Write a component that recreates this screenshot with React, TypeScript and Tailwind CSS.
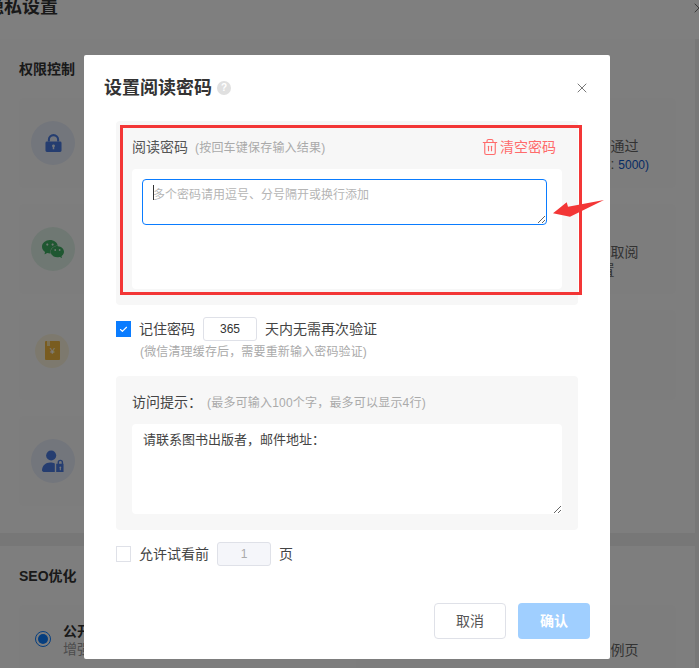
import { Trash2, X, Check } from 'lucide-react';
import { SiWechat } from 'react-icons/si';

function IconCircle({ tone, children }: { tone: string; children: React.ReactNode }) {
  return (
    <div className={`rounded-full flex items-center justify-center shrink-0 ${tone}`}>
      {children}
    </div>
  );
}

function SettingCard({ icon, lines }: { icon: React.ReactNode; lines: React.ReactNode[] }) {
  return (
    <div className="h-[90px] rounded-[4px] bg-[#fbfbfb] pl-[12px] flex items-center gap-[17px]">
      {icon}
      <div className="mt-[6px] text-[14px] leading-[18px] whitespace-nowrap text-[#666]">
        {lines.map((line, i) => (
          <div key={i}>{line}</div>
        ))}
      </div>
    </div>
  );
}

function PageBehind() {
  return (
    <div className="h-[668px] overflow-hidden bg-[#eeeeee]">
      <div className="h-[39px] bg-white flex items-start justify-between -ml-[14px] -mr-[8px]">
        <h1 className="text-[18px] leading-[18px] font-bold text-[#333] -mt-[2px]">隐私设置</h1>
        <X size={16} strokeWidth={1} className="text-[#333]" />
      </div>
      <div className="w-[695px] h-[494px] bg-[#fcfcfc] px-[19px] pt-[21px]">
        <h2 className="text-[14px] leading-[18px] font-bold text-[#333] mb-[20px]">权限控制</h2>
        <div className="grid grid-cols-2 gap-x-[16px] gap-y-[16px]">
          <SettingCard
            icon={<IconCircle tone="w-[44px] h-[44px] -mt-[0px] bg-[#e6ecf8]"><LockIcon /></IconCircle>}
            lines={['密码访问', '开启后读者需要输入阅读密码', '']}
          />
          <SettingCard
            icon={<IconCircle tone="w-[44px] h-[44px] bg-[#fbfbfb]"><span /></IconCircle>}
            lines={[
              <span className="font-bold text-[#333]">短信验证</span>,
              '开启后读者需要绑定手机短信通过',
              <span>
                手机验证后才可阅读书籍内容: <span className="text-[12px] text-[#0b57c9]">5000)</span>
              </span>,
            ]}
          />
          <SettingCard
            icon={<IconCircle tone="w-[44px] h-[44px] bg-[#dff1e6]"><SiWechat size={22} className="text-[#3fae62]" /></IconCircle>}
            lines={['微信关注', '关注公众号后阅读', '']}
          />
          <SettingCard
            icon={<IconCircle tone="w-[44px] h-[44px] bg-[#fbfbfb]"><span /></IconCircle>}
            lines={[
              <span className="font-bold text-[#333]">公众号验证</span>,
              '读者关注微信公众号后才能获取阅',
              '读验证码后方可进入阅读设 置',
            ]}
          />
          <SettingCard
            icon={<IconCircle tone="w-[34px] h-[34px] ml-[4px] mr-[6px] mb-[9px] bg-[#fbf3dc]"><BookIcon /></IconCircle>}
            lines={['付费阅读', '付费后才可阅读']}
          />
          <SettingCard
            icon={<IconCircle tone="w-[44px] h-[44px] bg-[#fbfbfb]"><span /></IconCircle>}
            lines={['']}
          />
          <SettingCard
            icon={<IconCircle tone="w-[44px] h-[44px] bg-[#e6ecf8]"><UserLockIcon /></IconCircle>}
            lines={['指定用户', '指定用户才可阅读']}
          />
        </div>
      </div>
      <div className="w-[695px] mt-[13px] bg-[#fcfcfc] px-[19px] pt-[21px] h-[122px]">
        <h2 className="text-[14px] leading-[18px] font-bold text-[#333] mb-[20px]">SEO优化</h2>
        <div className="grid grid-cols-2 gap-x-[16px]">
          <div className="h-[90px] rounded-[4px] bg-[#fbfbfb] pl-[16px] pt-[17px] flex gap-[12px]">
            <span className="mt-[9px] w-[16px] h-[16px] rounded-full border border-[#0a7cff] flex items-center justify-center">
              <span className="w-[10px] h-[10px] rounded-full bg-[#0a7cff]" />
            </span>
            <div className="text-[14px] leading-[18px]">
              <div className="font-bold text-[#333]">公开</div>
              <div className="text-[#999]">增强搜索引擎收录</div>
            </div>
          </div>
          <div className="h-[90px] rounded-[4px] bg-[#fbfbfb] pl-[73px] pt-[36px]">
            <div className="text-[14px] leading-[18px] text-[#666] whitespace-nowrap">搜索引擎不收录书籍内容及案例页</div>
          </div>
        </div>
      </div>
    </div>
  );
}

function LockIcon() {
  return (
    <svg width="17" height="19" viewBox="0 0 18 20" fill="#4a7be0">
      <path d="M3 8V6a6 6 0 0 1 12 0v2h-2.200V6a3.800 3.800 0 0 0-7.600 0v2z" />
      <path fillRule="evenodd" d="M2 8h14a1.500 1.500 0 0 1 1.500 1.500v8A1.500 1.500 0 0 1 16 19H2a1.500 1.500 0 0 1-1.500-1.500v-8A1.500 1.500 0 0 1 2 8zm7 3a1.500 1.500 0 0 0-.8 2.800V16h1.600v-2.200A1.500 1.500 0 0 0 9 11z" />
    </svg>
  );
}

function BookIcon() {
  return (
    <svg width="15" height="19" viewBox="0 0 15 19">
      <rect x="0" y="0" width="15" height="19" rx="1" fill="#f2b840" />
      <rect x="2" y="0" width="3" height="5" fill="#fbe3a4" />
      <text x="7.500" y="13" textAnchor="middle" fontSize="9" fill="#fff" fontFamily="Liberation Sans">¥</text>
    </svg>
  );
}

function UserLockIcon() {
  return (
    <svg width="22" height="22" viewBox="0 0 24 24" fill="#4a7be0">
      <circle cx="10" cy="6" r="5.500" />
      <path d="M0 22c0-5 4-8.500 9-8.500 2 0 3.500.4 5 1.200V24H3c-2 0-3-.8-3-2z" />
      <path fillRule="evenodd" d="M17 15v-1.500a3 3 0 0 1 6 0V15h.5v9h-8v-9zm1.500 0h3v-1.500a1.500 1.500 0 0 0-3 0zm1.500 3a1 1 0 0 0-.6 1.800V22h1.200v-2.200A1 1 0 0 0 20 18z" />
    </svg>
  );
}

function SetPasswordModal() {
  return (
    <div className="absolute left-[84px] top-[55px] w-[526px] h-[604px] bg-white rounded-[2px] pl-[32px] pr-[32px] pt-[21px]">
      <div className="-ml-[12px] flex items-center h-[24px]">
        <h3 className="text-[18px] leading-[24px] font-bold text-[#333]">设置阅读密码</h3>
        <span className="ml-[5px] w-[14px] h-[14px] rounded-full bg-[#e0e0e0] text-white text-[10px] leading-[14px] font-bold text-center">?</span>
        <X size={16} strokeWidth={1.2} className="ml-auto -mr-[12px] text-[#555]" />
      </div>

      <section className="mt-[21px] rounded-[4px] bg-[#f7f7f7] px-[16px] pt-[16px] pb-[16px]">
        <div className="flex items-center justify-between h-[20px] pr-[6px]">
          <div className="text-[14px] leading-[20px] text-[#555]">
            阅读密码<span className="text-[12px] tracking-[0.2px] text-[#aaa] ml-[7px]">(按回车键保存输入结果)</span>
          </div>
          <div className="flex items-center gap-[1px] text-[14px] text-[#ff6b6b]">
            <Trash2 size={18} strokeWidth={1.5} />
            清空密码
          </div>
        </div>
        <div className="mt-[12px] h-[120px] rounded-[4px] bg-white pl-[10px] pr-[15px] pt-[10px]">
          <div className="relative h-[46px]">
            <textarea
              readOnly
              placeholder="多个密码请用逗号、分号隔开或换行添加"
              className="block w-full h-[46px] rounded-[4px] border border-[#0a7cff] bg-white pl-[10px] pt-[6px] text-[12px] leading-[18px] outline-none placeholder:text-[#b5b5b5]"
            />
            <span className="absolute left-[11px] top-[6px] w-px h-[15px] bg-[#333]" />
          </div>
        </div>
      </section>

      <div className="mt-[12px] flex items-center h-[24px] text-[14px] text-[#444]">
        <span className="w-[15px] h-[16px] bg-[#0a7cff] flex items-center justify-center">
          <Check size={9} strokeWidth={3} className="text-white" />
        </span>
        <span className="ml-[8px]">记住密码</span>
        <input readOnly value="365" className="ml-[8px] w-[54px] h-[24px] rounded-[3px] border border-[#dfe1e8] text-center text-[12px] text-[#333] outline-none" />
        <span className="ml-[8px]">天内无需再次验证</span>
      </div>
      <div className="mt-[2px] ml-[24px] text-[12px] tracking-[0.15px] leading-[18px] text-[#aaa]">(微信清理缓存后，需要重新输入密码验证)</div>

      <section className="mt-[15px] rounded-[4px] bg-[#f7f7f7] px-[16px] pt-[16px] pb-[16px]">
        <div className="h-[20px] text-[14px] leading-[20px] text-[#444]">
          访问提示：<span className="text-[12px] tracking-[0.2px] text-[#aaa] ml-[5px]">(最多可输入100个字，最多可以显示4行)</span>
        </div>
        <textarea
          readOnly
          defaultValue="请联系图书出版者，邮件地址："
          className="block mt-[12px] w-full h-[90px] rounded-[4px] bg-white pl-[11px] pt-[7px] text-[13px] leading-[18px] text-[#444] outline-none"
        />
      </section>

      <div className="mt-[12px] flex items-center h-[24px] text-[14px] text-[#444]">
        <span className="w-[15px] h-[16px] border border-[#dfe1e8] bg-white" />
        <span className="ml-[8px]">允许试看前</span>
        <input readOnly value="1" className="ml-[8px] w-[54px] h-[24px] rounded-[3px] border border-[#dfe1e8] bg-[#f5f6fa] text-center text-[12px] text-[#aaa] outline-none" />
        <span className="ml-[8px]">页</span>
      </div>

      <div className="mt-[37px] -mr-[12px] flex justify-end gap-[12px]">
        <button className="w-[72px] h-[36px] rounded-[4px] border border-[#dfe1e8] bg-white text-[14px] text-[#555]">取消</button>
        <button className="w-[72px] h-[36px] rounded-[4px] bg-[#a0cfff] text-[14px] font-bold text-white">确认</button>
      </div>
    </div>
  );
}

export default function App() {
  return (
    <div className="relative w-[699px] h-[668px] overflow-hidden font-['Liberation_Sans','Noto_Sans_CJK_SC',sans-serif]">
      <PageBehind />
      <div className="absolute inset-0 bg-black/50" />
      <SetPasswordModal />
      <div className="absolute left-[120px] top-[125px] w-[462px] h-[170px] border-[3px] border-[#f33636]" />
      <svg className="absolute left-[552px] top-[199px]" width="53" height="19" viewBox="0 0 53 19">
        <polygon points="1,14.300 14.700,3.300 16,7.700 52,1 18,17.700" fill="#f33636" />
      </svg>
    </div>
  );
}
